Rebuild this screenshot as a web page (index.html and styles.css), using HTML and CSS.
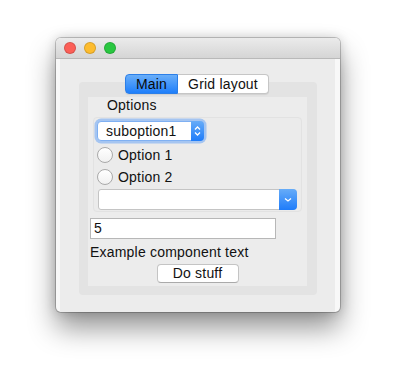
FILE: index.html
```html
<!DOCTYPE html>
<html lang="en">
<head>
    <meta charset="UTF-8">
    <title>Main</title>
    <link rel="stylesheet" href="styles.css">
</head>
<body>
<div class="window">
  <div class="titlebar">
    <span class="light red"></span>
    <span class="light yellow"></span>
    <span class="light green"></span>
  </div>
  <div class="content">
    <div class="tabs">
      <div class="tab active">Main</div>
      <div class="tab">Grid layout</div>
    </div>
    <div class="tab-pane">
      <div class="inner">
        <div class="group-title">Options</div>
        <div class="group">
          <div class="combo focused">
            <span class="combo-text">suboption1</span>
            <span class="stepper">
              <svg width="13" height="20" viewBox="0 0 13 20"><polyline points="4,8.5 6.5,6 9,8.5" /><polyline points="4,11.5 6.5,14 9,11.5" /></svg>
            </span>
          </div>
          <label class="radio"><span class="dot"></span>Option 1</label>
          <label class="radio"><span class="dot"></span>Option 2</label>
          <div class="combo wide">
            <span class="combo-text"></span>
            <span class="drop">
              <svg width="18" height="21" viewBox="0 0 18 21"><polyline points="6,9.5 9,12 12,9.5" /></svg>
            </span>
          </div>
        </div>
        <div class="field">5</div>
        <div class="caption">Example component text</div>
        <button class="push">Do stuff</button>
      </div>
    </div>
  </div>
</div>
</body>
</html>
```

FILE: styles.css
```css
html{
  height:100%;
  background:#ffffff;
}
body{
  margin:0;
  min-height:100%;
  box-sizing:border-box;
  background:#ffffff;
  font-family:"Liberation Sans", Arial, sans-serif;
  font-size:14px;
  letter-spacing:0.2px;
  color:#111;
  padding:38px 0 0 56px;
}

.window{
  width:284px;
  height:274px;
  background:#f8f8f8;
  border-radius:5px;
  box-shadow:0 0 0 1px rgba(0,0,0,0.2), 0 16px 28px rgba(0,0,0,0.42), 0 0 12px rgba(0,0,0,0.18);
  display:flex;
  flex-direction:column;
  overflow:hidden;
}

.titlebar{
  height:20px;
  background:linear-gradient(to bottom,#ebebeb,#d5d5d5);
  border-bottom:1px solid #b9b9b9;
  display:flex;
  align-items:center;
  gap:8px;
  padding-left:8px;
}
.light{
  width:12px;
  height:12px;
  border-radius:50%;
  box-sizing:border-box;
  border:0.5px solid rgba(0,0,0,0.15);
}
.red{ background:#fc5f57; }
.yellow{ background:#fdbc2e; }
.green{ background:#29c740; }

.content{
  flex:1;
  background:#ececec;
  margin:0 5px 0 4px;
  padding-top:15px;
}

.tabs{
  margin-left:65px;
  margin-bottom:-12px;
  display:flex;
  position:relative;
  z-index:2;
}
.tab{
  height:18px;
  line-height:18px;
  width:90px;
  text-align:center;
  background:#fff;
  border:1px solid #c6c6c6;
  border-left:none;
  border-radius:0 4px 4px 0;
  box-shadow:0 1px 1px rgba(0,0,0,0.08);
}
.tab.active{
  width:53px;
  background:linear-gradient(to bottom,#69aef9,#1f7ffb);
  border:1px solid #2c7fe8;
  border-radius:4px 0 0 4px;
  color:#0a0a0a;
  box-sizing:border-box;
  height:20px;
}

.tab-pane{
  width:238px;
  margin-left:19px;
  background:#e3e3e3;
  border-radius:4px;
  padding:15px 10px 9px 9px;
  box-sizing:border-box;
}

.inner{
  background:#ececec;
  height:189px;
  display:flex;
  flex-direction:column;
  padding-bottom:3px;
  box-sizing:border-box;
}

.group-title{
  line-height:16px;
  padding-left:19px;
}

.group{
  margin:4px 5px 0 5px;
  border:1px solid #e2e2e2;
  border-radius:4px;
  background:#ebebeb;
  padding:3px 4px 1px 3px;
  display:flex;
  flex-direction:column;
}

.combo{
  display:flex;
  height:20px;
  width:107px;
  box-sizing:border-box;
  background:#fff;
  border-radius:4px;
  border:1px solid #b8b8b8;
}
.combo.focused{
  border-color:#7fb0f2;
  box-shadow:0 0 0 2.5px rgba(108,165,245,0.55);
}
.combo-text{
  flex:1;
  line-height:18px;
  padding-left:8px;
}
.stepper{
  width:13px;
  margin:-1px -1px -1px 0;
  background:linear-gradient(to bottom,#67acf8,#1e7cfa);
  border-radius:0 4px 4px 0;
}
.stepper svg,.drop svg{
  display:block;
  fill:none;
  stroke:#fff;
  stroke-width:1.3;
}

.radio{
  display:flex;
  align-items:center;
  height:16px;
  margin-top:6px;
  gap:5px;
}
.dot{
  width:14px;
  height:14px;
  border-radius:50%;
  border:1px solid #a9a9a9;
  background:linear-gradient(to bottom,#ffffff,#f1f1f1);
}

.combo.wide{
  width:199px;
  height:21px;
  margin-top:4px;
  margin-left:1px;
  border-color:#c4c4c4;
  border-radius:3px 4px 4px 3px;
}
.drop{
  width:18px;
  margin:-1px -1px -1px 0;
  background:linear-gradient(to bottom,#67acf8,#1e7cfa);
  border-radius:0 4px 4px 0;
}

.field{
  margin:6px 0 0 2px;
  width:186px;
  height:21px;
  box-sizing:border-box;
  border:1px solid #b7b7b7;
  background:#fff;
  line-height:19px;
  padding-left:3px;
}

.caption{
  margin:5px 0 0 2px;
  line-height:16px;
}

.push{
  align-self:center;
  margin-top:4px;
  width:82px;
  height:19px;
  padding:0;
  font-family:inherit;
  font-size:14px;
  letter-spacing:0.2px;
  color:#111;
  background:#fff;
  border:1px solid #c4c4c4;
  border-bottom-color:#aaaaaa;
  border-radius:4px;
  line-height:17px;
}
```
